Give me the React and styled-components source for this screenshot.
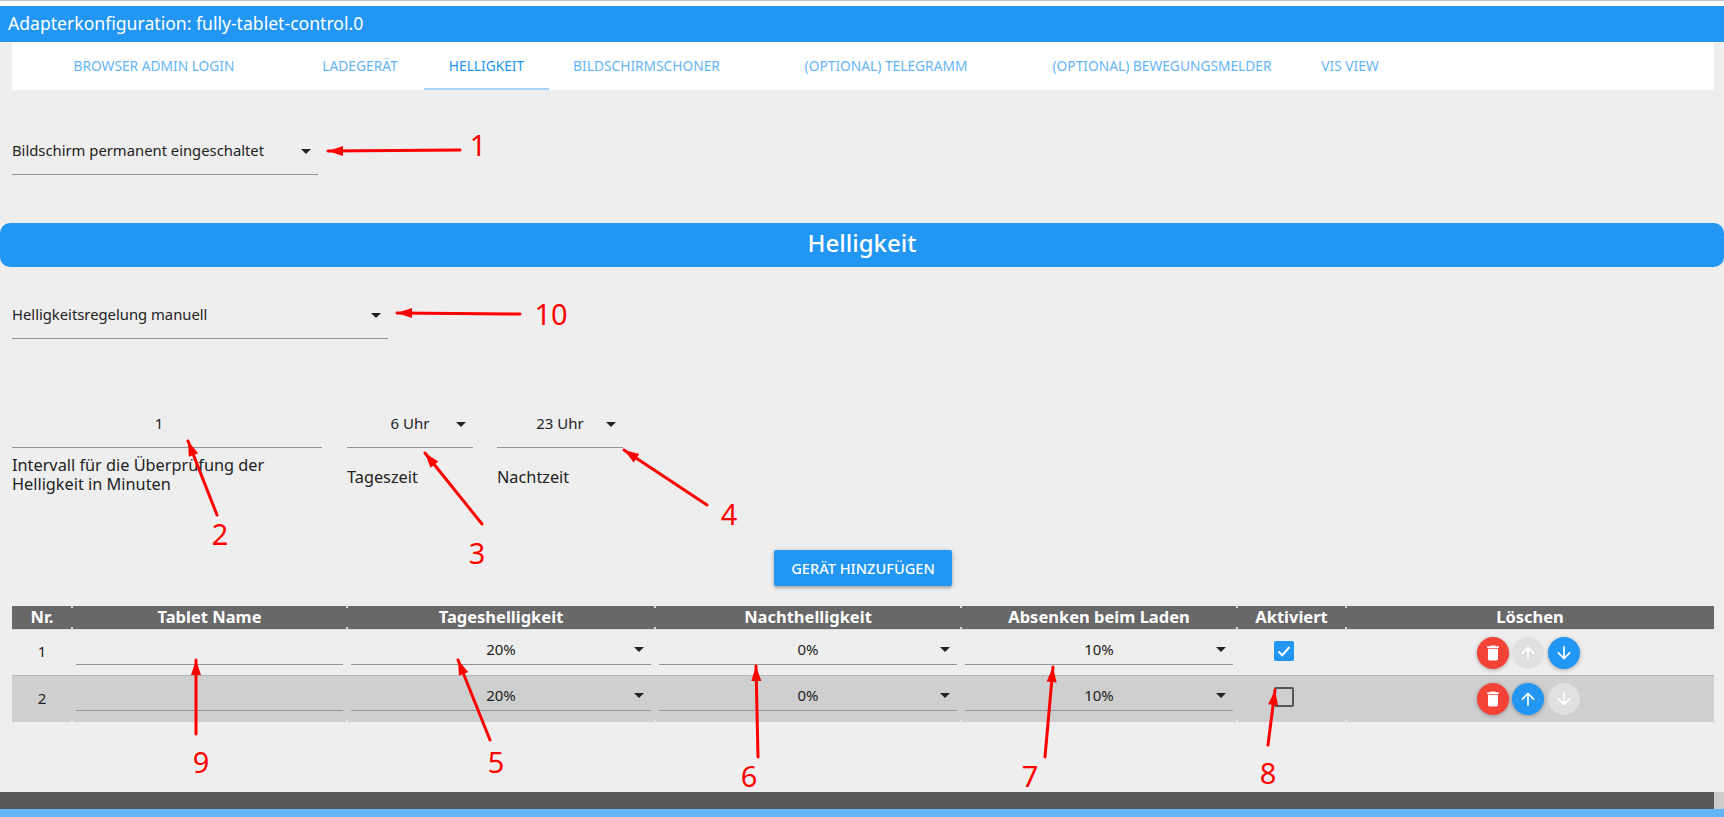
import React from "react";
import styled, { createGlobalStyle } from "styled-components";

const tabs = [
    { label: "Browser Admin Login", width: 284 },
    { label: "Ladegerät", width: 128 },
    { label: "Helligkeit", width: 125, active: true },
    { label: "Bildschirmschoner", width: 195 },
    { label: "(optional) Telegramm", width: 284 },
    { label: "(optional) Bewegungsmelder", width: 268 },
    { label: "vis view", width: 108 },
];

const columns = ["Nr.", "Tablet Name", "Tageshelligkeit", "Nachthelligkeit", "Absenken beim Laden", "Aktiviert", "Löschen"];

const rows = [
    { nr: 1, checked: true, upActive: false, downActive: true, striped: false },
    { nr: 2, checked: false, upActive: true, downActive: false, striped: true },
];

// annotation arrows drawn over the screenshot: tail x/y, tip x/y
const arrows = [
    [460, 150, 328, 151],
    [520, 314, 397, 313],
    [217, 515, 188, 441],
    [482, 524, 425, 453],
    [707, 505, 624, 450],
    [196, 734, 196, 660],
    [490, 740, 458, 660],
    [758, 757, 756, 666],
    [1045, 757, 1053, 667],
    [1268, 745, 1275, 690],
];

const numbers = [
    { text: "1", x: 478, y: 144 },
    { text: "10", x: 551, y: 313 },
    { text: "2", x: 220, y: 533 },
    { text: "3", x: 477, y: 552 },
    { text: "4", x: 729, y: 513 },
    { text: "9", x: 201, y: 761 },
    { text: "5", x: 496, y: 761 },
    { text: "6", x: 749, y: 775 },
    { text: "7", x: 1030, y: 775 },
    { text: "8", x: 1268, y: 772 },
];

const GlobalStyle = createGlobalStyle`
    html, body {
        margin: 0;
        padding: 0;
        background: #eeeeee;
    }
    body {
        font-family: "Noto Sans", "Open Sans", sans-serif;
        color: #222222;
    }
`;

const Page = styled.div`
    position: relative;
    width: 1724px;
    height: 817px;
    overflow: hidden;
    background: #eeeeee;
`;

const TopStrip = styled.div`
    height: 5px;
    background: #ffffff;
    border-top: 1px solid #c4c4c4;
`;

const TitleBar = styled.div`
    height: 36px;
    padding-left: 8px;
    background: #2196f3;
    color: #ffffff;
    font-size: 17.6px;
    line-height: 35px;
`;

const TabBar = styled.div`
    display: flex;
    height: 48px;
    margin: 0 10px 0 12px;
    background: #ffffff;
`;

const Tab = styled.div`
    display: flex;
    align-items: center;
    justify-content: center;
    box-sizing: border-box;
    width: ${(p) => p.$width}px;
    color: #2196f3;
    opacity: ${(p) => (p.$active ? 1 : 0.7)};
    border-bottom: 2px solid ${(p) => (p.$active ? "#a6d5fa" : "transparent")};
    font-size: 13.75px;
    text-transform: uppercase;
`;

const Section = styled.div`
    padding-left: 12px;
    margin-top: ${(p) => p.$top}px;
`;

const FieldRow = styled(Section)`
    display: flex;
    gap: 24px;
    height: 93px;
`;

const FieldColumn = styled.div`
    width: ${(p) => p.$width}px;
    flex-shrink: 0;
    &:first-child {
        margin-right: 1px;
    }
`;

const Field = styled.div`
    position: relative;
    display: flex;
    align-items: center;
    justify-content: ${(p) => (p.$center ? "center" : "flex-start")};
    box-sizing: border-box;
    width: ${(p) => (p.$width ? `${p.$width}px` : "100%")};
    height: ${(p) => (p.$compact ? 31 : 47)}px;
    padding-right: ${(p) => (p.$shift ? 16 : 0)}px;
    padding-bottom: ${(p) => (p.$compact ? 1 : 2)}px;
    border-bottom: 1px solid #949494;
    font-size: ${(p) => (p.$center ? 15 : 14.8)}px;
`;

const Caret = styled.svg`
    position: absolute;
    right: 0;
    top: 50%;
    width: 24px;
    height: 24px;
    margin-top: -12px;
    fill: #222222;
`;

const Heading = styled.div`
    height: 44px;
    margin-top: 48px;
    border-radius: 10px;
    background: #2196f3;
    color: #ffffff;
    font-size: 24px;
    font-weight: 500;
    line-height: 40px;
    text-align: center;
`;

const FieldLabel = styled.div`
    margin-top: ${(p) => p.$top}px;
    font-size: 16.3px;
    line-height: 19px;
`;

const AddButton = styled.button`
    display: block;
    width: 178px;
    height: 36px;
    margin: 56px 0 0 774px;
    padding: 0;
    border: 0;
    border-radius: 2px;
    background: #2196f3;
    color: #ffffff;
    font-family: inherit;
    font-size: 14.6px;
    font-weight: 500;
    box-shadow: 0 1px 5px rgba(0, 0, 0, 0.25), 0 2px 2px rgba(0, 0, 0, 0.14);
`;

const Table = styled.div`
    display: grid;
    grid-template-columns: 60px 275px 308px 306px 276px 109px 368px;
    margin: 20px 0 0 12px;
`;

// the small light ticks where the column borders of the table show through
const HeadCell = styled.div`
    position: relative;
    height: 23px;
    border-bottom: 1px solid #dddddd;
    background: #686868;
    color: #ffffff;
    font-size: 16.5px;
    font-weight: 700;
    line-height: 21px;
    text-align: center;
    &:not(:first-child)::before,
    &:not(:first-child)::after {
        content: "";
        position: absolute;
        left: -1px;
        width: 2px;
        height: 2px;
        background: #d4d4d4;
    }
    &::before {
        top: 0;
    }
    &::after {
        bottom: 0;
    }
`;

const Cell = styled.div`
    position: relative;
    display: flex;
    align-items: ${(p) => (p.$bottom ? "flex-end" : "center")};
    justify-content: center;
    box-sizing: border-box;
    height: ${(p) => (p.$striped ? 47 : 45)}px;
    padding: ${(p) => (p.$bottom ? `0 4px ${p.$striped ? 11 : 10}px` : "0")};
    padding-bottom: ${(p) => (p.$first ? "3px" : "")};
    border-top: ${(p) => (p.$striped ? "1px solid #b4b4b4" : "0")};
    background: ${(p) => (p.$striped ? "#cfcfcf" : "#eeeeee")};
    font-size: 15px;
    &::after {
        content: "";
        display: ${(p) => (p.$striped && !p.$first ? "block" : "none")};
        position: absolute;
        left: -1px;
        bottom: 0;
        width: 2px;
        height: 2px;
        background: #e4e4e4;
    }
`;

const CheckBox = styled.div`
    display: flex;
    align-items: center;
    justify-content: center;
    box-sizing: border-box;
    width: 20px;
    height: 20px;
    margin: 0 15px 4px 0;
    border-radius: 2px;
    border: ${(p) => (p.$checked ? "0" : "2px solid #555555")};
    background: ${(p) => (p.$checked ? "#2196f3" : "transparent")};
`;

const Actions = styled.div`
    display: flex;
    gap: 3.5px;
    margin-right: 4px;
`;

const RoundButton = styled.button`
    display: flex;
    align-items: center;
    justify-content: center;
    width: 32px;
    height: 32px;
    padding: 0;
    border: 0;
    border-radius: 50%;
    background: ${(p) => p.$color};
    box-shadow: ${(p) => (p.$flat ? "none" : "0 1px 4px rgba(0, 0, 0, 0.3)")};
    svg {
        width: 20px;
        height: 20px;
        fill: #ffffff;
    }
`;

const Footer = styled.div`
    display: flex;
    height: 17px;
    margin-top: 70px;
    background: #585858;
    &::after {
        content: "";
        width: 10px;
        margin-left: auto;
        background: #cccccc;
    }
`;

const FooterBlue = styled.div`
    height: 8px;
    background: #64b5f6;
`;

const ArrowLayer = styled.svg`
    position: absolute;
    left: 0;
    top: 0;
    width: 1724px;
    height: 817px;
    pointer-events: none;
`;

const Number = styled.div`
    position: absolute;
    left: ${(p) => p.$x}px;
    top: ${(p) => p.$y}px;
    transform: translate(-50%, -50%);
    color: #ff0000;
    font-size: 29px;
    line-height: 1;
`;

const SelectCaret = () => (
    <Caret viewBox="0 0 24 24">
        <path d="M7 10l5 5 5-5z" />
    </Caret>
);

const Select = ({ value, width, center, compact }) => (
    <Field $width={width} $center={center} $compact={compact}>
        {value}
        <SelectCaret />
    </Field>
);

const TrashIcon = () => (
    <svg viewBox="0 0 24 24">
        <path d="M6 19c0 1.1.9 2 2 2h8c1.1 0 2-.9 2-2V7H6v12zM19 4h-3.5l-1-1h-5l-1 1H5v2h14V4z" />
    </svg>
);

const UpIcon = () => (
    <svg viewBox="0 0 24 24">
        <path d="M4 12l1.41 1.41L11 7.83V20h2V7.83l5.58 5.59L20 12l-8-8-8 8z" />
    </svg>
);

const DownIcon = () => (
    <svg viewBox="0 0 24 24">
        <path d="M20 12l-1.41-1.41L13 16.17V4h-2v12.17l-5.58-5.59L4 12l8 8 8-8z" />
    </svg>
);

const Arrow = ({ points }) => {
    const [x1, y1, x2, y2] = points;
    const angle = (Math.atan2(y2 - y1, x2 - x1) * 180) / Math.PI;
    return (
        <g>
            <line x1={x1} y1={y1} x2={x2} y2={y2} stroke="#ff0000" strokeWidth="3" strokeLinecap="round" />
            <polygon points="0,0 -15,-5 -15,5" fill="#ff0000" transform={`translate(${x2} ${y2}) rotate(${angle})`} />
        </g>
    );
};

const App = () => {
    return (
        <Page>
            <GlobalStyle />
            <TopStrip />
            <TitleBar>Adapterkonfiguration: fully-tablet-control.0</TitleBar>
            <TabBar>
                {tabs.map((tab) => (
                    <Tab key={tab.label} $width={tab.width} $active={tab.active}>
                        {tab.label}
                    </Tab>
                ))}
            </TabBar>

            <Section $top={38}>
                <Select value="Bildschirm permanent eingeschaltet" width={306} />
            </Section>

            <Heading>Helligkeit</Heading>

            <Section $top={25}>
                <Select value="Helligkeitsregelung manuell" width={376} />
            </Section>

            <FieldRow $top={62}>
                <FieldColumn $width={310}>
                    <Field $center $shift>1</Field>
                    <FieldLabel $top={8}>
                        Intervall für die Überprüfung der
                        <br />
                        Helligkeit in Minuten
                    </FieldLabel>
                </FieldColumn>
                <FieldColumn $width={126}>
                    <Select value="6 Uhr" center />
                    <FieldLabel $top={20}>Tageszeit</FieldLabel>
                </FieldColumn>
                <FieldColumn $width={126}>
                    <Select value="23 Uhr" center />
                    <FieldLabel $top={20}>Nachtzeit</FieldLabel>
                </FieldColumn>
            </FieldRow>

            <AddButton>GERÄT HINZUFÜGEN</AddButton>

            <Table>
                {columns.map((col) => (
                    <HeadCell key={col}>{col}</HeadCell>
                ))}
                {rows.map((row) => (
                    <React.Fragment key={row.nr}>
                        <Cell $striped={row.striped} $first>{row.nr}</Cell>
                        <Cell $striped={row.striped} $bottom>
                            <Field $compact />
                        </Cell>
                        <Cell $striped={row.striped} $bottom>
                            <Select value="20%" center compact />
                        </Cell>
                        <Cell $striped={row.striped} $bottom>
                            <Select value="0%" center compact />
                        </Cell>
                        <Cell $striped={row.striped} $bottom>
                            <Select value="10%" center compact />
                        </Cell>
                        <Cell $striped={row.striped}>
                            <CheckBox $checked={row.checked}>
                                {row.checked && (
                                    <svg width="16" height="16" viewBox="0 0 16 16">
                                        <path d="M2.5 8.5l3.7 3.7L13.5 4" fill="none" stroke="#ffffff" strokeWidth="2" />
                                    </svg>
                                )}
                            </CheckBox>
                        </Cell>
                        <Cell $striped={row.striped}>
                            <Actions>
                                <RoundButton $color="#f44336"><TrashIcon /></RoundButton>
                                <RoundButton $color={row.upActive ? "#2196f3" : "#e0e0e0"} $flat={!row.upActive}><UpIcon /></RoundButton>
                                <RoundButton $color={row.downActive ? "#2196f3" : "#e0e0e0"} $flat={!row.downActive}><DownIcon /></RoundButton>
                            </Actions>
                        </Cell>
                    </React.Fragment>
                ))}
            </Table>

            <Footer />
            <FooterBlue />

            <ArrowLayer viewBox="0 0 1724 817">
                {arrows.map((points) => (
                    <Arrow key={points.join("-")} points={points} />
                ))}
            </ArrowLayer>
            {numbers.map((n) => (
                <Number key={n.text} $x={n.x} $y={n.y}>{n.text}</Number>
            ))}
        </Page>
    );
};

export default App;
